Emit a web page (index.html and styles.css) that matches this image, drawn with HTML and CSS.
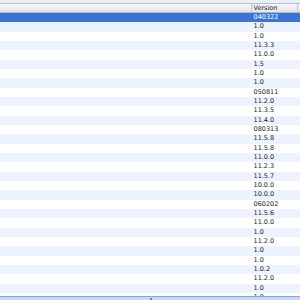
FILE: index.html
```html
<!DOCTYPE html>
<html>
<head>
<meta charset="utf-8">
<link rel="stylesheet" href="styles.css">
</head>
<body>
<div class="table">
  <div class="topstrip"></div>
  <div class="header">
    <div class="hcell hcell-name"></div>
    <div class="hcell hcell-version">Version</div>
  </div>
  <div class="rows">
    <div class="row selected"><span class="cell">040322</span></div>
    <div class="row"><span class="cell">1.0</span></div>
    <div class="row"><span class="cell">1.0</span></div>
    <div class="row"><span class="cell">11.3.3</span></div>
    <div class="row"><span class="cell">11.0.0</span></div>
    <div class="row"><span class="cell">1.5</span></div>
    <div class="row"><span class="cell">1.0</span></div>
    <div class="row"><span class="cell">1.0</span></div>
    <div class="row"><span class="cell">050811</span></div>
    <div class="row"><span class="cell">11.2.0</span></div>
    <div class="row"><span class="cell">11.3.5</span></div>
    <div class="row"><span class="cell">11.4.0</span></div>
    <div class="row"><span class="cell">080313</span></div>
    <div class="row"><span class="cell">11.5.8</span></div>
    <div class="row"><span class="cell">11.5.8</span></div>
    <div class="row"><span class="cell">11.0.0</span></div>
    <div class="row"><span class="cell">11.2.3</span></div>
    <div class="row"><span class="cell">11.5.7</span></div>
    <div class="row"><span class="cell">10.0.0</span></div>
    <div class="row"><span class="cell">10.0.0</span></div>
    <div class="row"><span class="cell">060202</span></div>
    <div class="row"><span class="cell">11.5.6</span></div>
    <div class="row"><span class="cell">11.0.0</span></div>
    <div class="row"><span class="cell">1.0</span></div>
    <div class="row"><span class="cell">11.2.0</span></div>
    <div class="row"><span class="cell">1.0</span></div>
    <div class="row"><span class="cell">1.0</span></div>
    <div class="row"><span class="cell">1.0.2</span></div>
    <div class="row"><span class="cell">11.2.0</span></div>
    <div class="row"><span class="cell">1.0</span></div>
    <div class="row"><span class="cell">1.0</span></div>
  </div>
  <div class="bottombar"><span class="grip"></span></div>
</div>
</body>
</html>
```
FILE: styles.css
```css
html, body {
  margin: 0;
  padding: 0;
  background: #ffffff;
}
.table {
  width: 300px;
  height: 300px;
  display: flex;
  flex-direction: column;
  overflow: hidden;
  font-family: "DejaVu Sans", "Liberation Sans", sans-serif;
  font-size: 6.5px;
  color: #1c1c1c;
}
.topstrip {
  height: 3px;
  background: #eceef1;
  border-bottom: 1px solid #a9c0e2;
  flex: none;
}
.header {
  height: 8px;
  flex: none;
  display: flex;
  background: linear-gradient(#f7f7f7, #e4e4e4);
  border-bottom: 1px solid #b8b8b8;
}
.hcell {
  line-height: 8px;
  white-space: nowrap;
}
.hcell-name {
  width: 251px;
  border-right: 1px solid #c2c2c2;
}
.hcell-version {
  flex: 1;
  padding-left: 1.5px;
  color: #222222;
  border-right: 1px solid #c8c8c8;
  margin-right: 2px;
}
.rows {
  flex: 1;
  overflow: hidden;
}
.row {
  height: 9.333px;
  line-height: 9.333px;
  padding-left: 253.5px;
  white-space: nowrap;
  background: #ffffff;
}
.row:nth-child(even) {
  background: #edf3fe;
}
.row.selected {
  background: #3875d7;
  color: #ffffff;
}
.bottombar {
  height: 3px;
  flex: none;
  background: #c9d9ef;
  border-top: 1px solid #86a8d8;
  position: relative;
}
.grip {
  position: absolute;
  left: 150px;
  top: 1px;
  width: 2px;
  height: 2px;
  background: #6d7f99;
}
```
